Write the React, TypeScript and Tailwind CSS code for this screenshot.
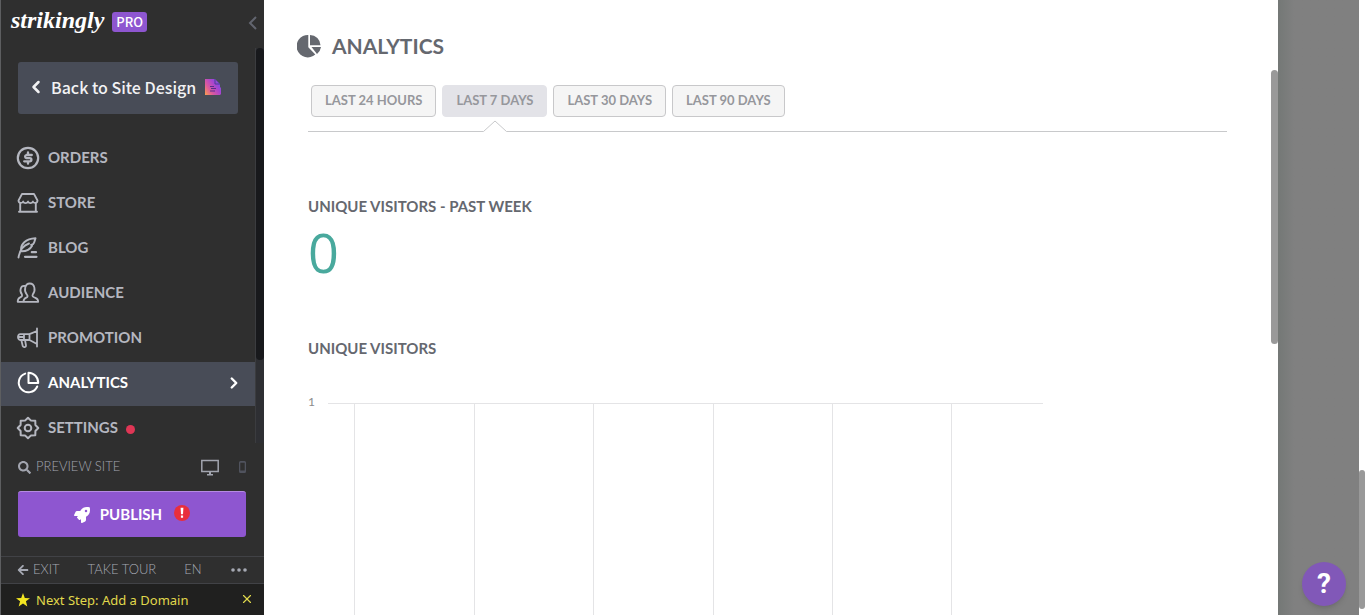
import React, { useState } from "react";
import { ChevronLeft, ChevronRight, X } from "lucide-react";
import { FaArrowLeft, FaRocket, FaSearch } from "react-icons/fa";

interface NavItem {
  label: string;
  icon: React.ReactNode;
  alert?: boolean;
}

function Icon({ children }: { children: React.ReactNode }) {
  return (
    <svg
      viewBox="0 0 24 24"
      className="h-6 w-6 shrink-0"
      fill="none"
      stroke="currentColor"
      strokeWidth="2"
      strokeLinejoin="round"
      strokeLinecap="round"
      aria-hidden="true"
    >
      {children}
    </svg>
  );
}

const navItems: NavItem[] = [
  {
    label: "ORDERS",
    icon: (
      <Icon>
        <circle cx="12" cy="12" r="10.2" strokeWidth="2.2" />
        <path d="M15.8 9H10.3a1.6 1.6 0 0 0 0 3.1h3.5a1.6 1.6 0 0 1 0 3.2H8.2M12 6.5V9M12 15.3v2.4" strokeWidth="2.3" />
      </Icon>
    ),
  },
  {
    label: "STORE",
    icon: (
      <Icon>
        <path d="M6 3h12l3.500 6.500c0 2.800-3.600 3.200-4.600 1-.8 2.200-4.100 2.200-4.900 0-.8 2.200-4.100 2.200-4.900 0-1 2.200-4.600 1.800-4.600-1z" strokeWidth="1.800" />
        <path d="M4.200 12.500v8M19.800 12.500v8M3 20.800h18" strokeWidth="1.900" />
      </Icon>
    ),
  },
  {
    label: "BLOG",
    icon: (
      <Icon>
        <path d="M2.500 21.500C3.500 15 7 9.500 13 7.500M5.200 15.300C4 8 9.800 2.800 19.500 2.300c-1 2.400-.8 4.200-2.400 5.900l-2 .6 1 1c-2.400 4.600-6 5.500-10.400 5.500" strokeWidth="1.900" />
        <path d="M15.800 16.200H20M9 20.800h11.500" strokeWidth="2.200" />
      </Icon>
    ),
  },
  {
    label: "AUDIENCE",
    icon: (
      <Icon>
        <path d="M10.7 13.300C7.800 10 8.600 2.500 13.800 2.500s6 7.500 3 10.800c-1 2 .2 2.700 2.600 3.500 2.100.8 2.800 1.700 2.800 4H7.500c0-2.300.8-3.400 2.800-4.200 1.500-.6 1.800-1.700.4-3.300z" strokeWidth="1.800" />
        <path d="M8.800 5C4.300 4.300 3.300 10.300 5.800 13.200c.7 1.800 0 2.500-1.600 3.100-1.900.8-2.500 1.800-2.500 4.500h5" strokeWidth="1.800" />
      </Icon>
    ),
  },
  {
    label: "PROMOTION",
    icon: (
      <Icon>
        <path d="M21 2.500v18M21 5l-7.500 3.200H4.300C1.200 8.200 1.200 14 4.300 14h9.200L21 18M13.500 8.200V14M8 8.200V14M2.500 11H8M5.300 14l1.500 6.200c.8 1.600 3.500 1 3.200-.8L9 14" strokeWidth="1.800" />
      </Icon>
    ),
  },
  {
    label: "ANALYTICS",
    icon: (
      <Icon>
        <path d="M9.200 2.600A9.600 9.600 0 1 0 21.200 15.500" />
        <path d="M12.500 1.800V12h9.700C22.200 6.200 18.300 2 12.500 1.800z" />
      </Icon>
    ),
  },
  {
    label: "SETTINGS",
    alert: true,
    icon: (
      <Icon>
        <path d="M12 1.700 15 4.600 19.300 4.700 19.400 9 22.300 12 19.400 15 19.300 19.300 15 19.400 12 22.300 9 19.400 4.700 19.300 4.600 15 1.700 12 4.600 9 4.700 4.700 9 4.600z" />
        <circle cx="12" cy="12" r="3.300" />
      </Icon>
    ),
  },
];

const ranges = ["LAST 24 HOURS", "LAST 7 DAYS", "LAST 30 DAYS", "LAST 90 DAYS"];

function DesignBadge() {
  return (
    <svg viewBox="0 0 18 18" className="h-[18px] w-[18px]" aria-hidden="true">
      <defs>
        <linearGradient id="badge" x1="0" y1="1" x2="1" y2="0.3">
          <stop offset="0" stopColor="#fba04c" />
          <stop offset="0.35" stopColor="#dc5a9c" />
          <stop offset="0.7" stopColor="#a945d0" />
          <stop offset="1" stopColor="#7a50e0" />
        </linearGradient>
      </defs>
      <path d="M1 1h10l5 5v3l1 1v6l-1 1H1z" fill="url(#badge)" />
      <path d="M11 1v5h5" fill="none" stroke="#4d3f95" strokeWidth="1" />
      <path d="M6 8.500h4M7 10.500h5M6 13h5" stroke="#563089" strokeWidth="1.200" />
    </svg>
  );
}

function Sidebar() {
  const [active, setActive] = useState("ANALYTICS");

  return (
    <aside className="flex w-[264px] shrink-0 flex-col border-l border-[#5d5e60] bg-[#2f2f2f] text-[#b5b7c0]">
      <div className="flex min-h-0 flex-1 flex-col overflow-hidden">
        {/* Brand */}
        <header className="flex h-12 shrink-0 items-start pl-[10px] pr-[7px]">
          <span className="mt-1 font-['Liberation_Serif',serif] text-2xl font-bold italic text-white">strikingly</span>
          <span className="ml-2 mt-3 flex h-5 items-center rounded-[3px] bg-[#8e56d0] px-1 font-['Noto_Sans_CJK_SC',sans-serif] text-[13px] font-medium text-white">
            PRO
          </span>
          <button aria-label="Collapse sidebar" className="ml-auto mt-4 text-[#62656f]">
            <svg viewBox="0 0 9 14" className="h-3.5 w-[9px]" fill="none" stroke="currentColor" strokeWidth="2" aria-hidden="true">
              <path d="M8 1 2 7l6 6" />
            </svg>
          </button>
        </header>

        <div className="flex min-h-0 flex-1">
          <div className="min-w-0 flex-1 border-r border-[#3b3c3f] pt-3.5">
            <button className="mx-[17px] flex h-[52px] w-[220px] items-center rounded-[3px] bg-[#484c57] pb-0.5 pl-2 font-['Noto_Sans_CJK_SC',sans-serif] text-base font-medium text-[#f2f2f4]">
              <ChevronLeft className="mr-[5px] h-5 w-5" strokeWidth={3} />
              <span>Back to Site Design</span>
              <span className="ml-2">
                <DesignBadge />
              </span>
            </button>

            <nav className="mt-[23px] flex flex-col gap-px">
              {navItems.map((item) => {
                const isActive = item.label === active;
                return (
                  <button
                    key={item.label}
                    onClick={() => setActive(item.label)}
                    className={`flex h-11 shrink-0 items-center pb-[3px] pl-[15px] pr-3 text-[15px] font-bold ${
                      isActive ? "bg-[#484c57] text-white" : ""
                    }`}
                  >
                    {item.icon}
                    <span className="ml-2">{item.label}</span>
                    {item.alert && <span className="ml-2 mt-[3px] h-[9px] w-[9px] rounded-full bg-[#df3655]" />}
                    {isActive && <ChevronRight className="ml-auto h-[18px] w-[18px]" strokeWidth={3.200} />}
                  </button>
                );
              })}
            </nav>
          </div>
          {/* Scroll rail */}
          <div className="w-2 bg-[#2e2f33]">
            <div className="h-[79%] rounded-full bg-[#18191c]" />
          </div>
        </div>
      </div>

      <div className="pl-[17px] pr-[18px]">
        <div className="flex h-12 items-center text-[13px] text-[#a2a5af]">
          <button className="flex items-center gap-[5px]">
            <FaSearch className="h-[13px] w-[13px]" />
            <span className="font-light">PREVIEW SITE</span>
          </button>
          <button aria-label="Desktop preview" className="ml-auto">
            <svg viewBox="0 0 18 17" className="h-[17px] w-[18px]" aria-hidden="true">
              <path d="M.8 1.500h16.400v11H.8z" fill="none" stroke="currentColor" strokeWidth="1.500" />
              <path d="M8 13h2v2h2v1.500H6V15h2z" fill="currentColor" />
            </svg>
          </button>
          <button aria-label="Mobile preview" className="ml-5 text-[#50535e]">
            <svg viewBox="0 0 7 12" className="h-3 w-[7px]" aria-hidden="true">
              <path d="M0 1.500Q0 0 1.500 0h4Q7 0 7 1.500v9Q7 12 5.500 12h-4Q0 12 0 10.500zM1.300 1.800v7.700h4.400V1.800z" fill="currentColor" fillRule="evenodd" />
            </svg>
          </button>
        </div>
        <button className="mb-[19px] flex h-[46px] w-full items-center justify-center rounded-[3px] border-t border-[#b58ae3] bg-[#8e56d0] text-[15px] font-bold text-white">
          <FaRocket className="h-4 w-4" />
          <span className="ml-2.5">PUBLISH</span>
          <svg viewBox="0 0 16 16" className="mb-1 ml-3 h-4 w-4" aria-hidden="true">
            <circle cx="8" cy="8" r="8" fill="#e92e3c" />
            <path d="M6.600 2.800h2.800L9 9.200H7zM6.900 10.500h2.200v2.200H6.900z" fill="#fff" />
          </svg>
        </button>
      </div>

      <div className="flex h-[27px] items-center border-t border-[#414246] pl-4 pr-[17px] text-[13px] font-light text-[#a6a9b3]">
        <button className="flex items-center gap-1">
          <FaArrowLeft className="h-3 w-3" />
          EXIT
        </button>
        <button className="ml-7">TAKE TOUR</button>
        <button className="ml-7">EN</button>
        <button aria-label="More" className="ml-auto">
          <svg viewBox="0 0 16 4" className="h-1 w-4" fill="currentColor" aria-hidden="true">
            <circle cx="2" cy="2" r="1.800" />
            <circle cx="8" cy="2" r="1.800" />
            <circle cx="14" cy="2" r="1.800" />
          </svg>
        </button>
      </div>
      <div className="flex h-8 items-center border-t border-[#414246] bg-[#20201f] pl-[15px] pr-2.5 text-[#e0d94c]">
        <svg viewBox="0 0 24 24" className="h-3.5 w-3.5 text-[#f3e622]" fill="currentColor" aria-hidden="true">
          <path d="M12 0l3.100 8.400 8.900.4-7 5.500 2.400 8.700L12 18l-7.400 5L7 14.300 0 8.800l8.900-.4z" />
        </svg>
        <a href="#domain" className="ml-1.5 mt-0.5 font-['Noto_Sans',sans-serif] text-[13px]">
          Next Step: Add a Domain
        </a>
        <button aria-label="Dismiss" className="ml-auto pb-0.5">
          <X className="h-3.5 w-3.5" strokeWidth={2} />
        </button>
      </div>
    </aside>
  );
}

function VisitorsChart() {
  return (
    <svg width="736" height="260" className="block" stroke="#e4e4e6" aria-label="Unique visitors chart">
      <text x="0" y="22" stroke="none" fill="#8b8b8b" fontSize="12">
        1
      </text>
      <path d="M20 19.500h715" />
      {[46, 166, 285, 405, 524, 643].map((x) => (
        <path key={x} d={`M${x + 0.5} 19V260`} />
      ))}
    </svg>
  );
}

export default function App() {
  const [range, setRange] = useState("LAST 7 DAYS");

  return (
    <div className="flex h-screen overflow-hidden bg-white font-['Lato',sans-serif]">
      <Sidebar />

      <main className="relative min-w-0 flex-1 overflow-hidden bg-white pl-11 pr-[51px] pt-8 text-[#65686f]">
        <h1 className="-ml-[11px] flex h-7 items-center gap-[11px] text-[21px] font-bold">
          <svg viewBox="0 0 24 24" className="h-6 w-6" fill="currentColor" aria-hidden="true">
            <path d="M11.300 1v12.200l7 7.300A11.200 11.200 0 1 1 11.300 1z" />
            <path d="M13 1a10.500 10.500 0 0 1 10.500 10.300H13z" />
            <path d="M14.500 13H24a11 11 0 0 1-4 7z" />
          </svg>
          ANALYTICS
        </h1>

        {/* Date ranges */}
        <div className="mt-[25px] flex gap-1.5 border-b border-[#c8c9cb] pb-3.5 pl-[3px] text-[13px] font-bold text-[#96979c]">
          {ranges.map((label) => (
            <div key={label} className="relative">
              <button
                onClick={() => setRange(label)}
                className={`h-8 rounded-[4px] border px-[13px] ${
                  label === range ? "border-[#e3e3e8] bg-[#e3e3e8]" : "border-[#c8c8ca] bg-[#f5f5f5]"
                }`}
              >
                {label}
              </button>
              {label === range && (
                <svg
                  viewBox="0 0 24 12"
                  className="absolute left-1/2 top-full mt-[3px] h-3 w-6 -translate-x-1/2"
                  aria-hidden="true"
                >
                  <path d="M0 12 12 1l12 11z" fill="#fff" />
                  <path d="M.5 11.500 12 1l11.500 10.500" fill="none" stroke="#c8c9cb" />
                </svg>
              )}
            </div>
          ))}
        </div>

        <section className="mt-16">
          <h2 className="text-[15px] leading-5 font-bold">UNIQUE VISITORS - PAST WEEK</h2>
          <p className="mt-1 font-['Open_Sans',sans-serif] text-[54px] leading-[64px] text-[#49a99d]">0</p>
        </section>

        <section className="mt-[54px]">
          <h2 className="text-[15px] leading-5 font-bold">UNIQUE VISITORS</h2>
          <div className="mt-[26px]">
            <VisitorsChart />
          </div>
        </section>

        <div className="absolute right-0 top-[70px] h-[274px] w-[7px] rounded-t-full rounded-b-full bg-[#999]" />
      </main>

      {/* Dimmed site preview */}
      <div className="relative flex w-[87px] shrink-0">
        <div className="flex-1 bg-linear-to-r from-[#747876] to-[#808080] to-20%" />
        <div className="w-1.5 bg-white" />
        <div className="absolute bottom-1.5 right-0 h-[139px] w-1.5 rounded-t-full rounded-b-full bg-[#999]" />
        <button
          aria-label="Help"
          className="absolute bottom-[9px] right-[19px] flex h-11 w-11 items-center justify-center rounded-full bg-[#8158b8] font-['Roboto',sans-serif] text-[28px] font-bold text-white shadow-md"
        >
          ?
        </button>
      </div>
    </div>
  );
}
